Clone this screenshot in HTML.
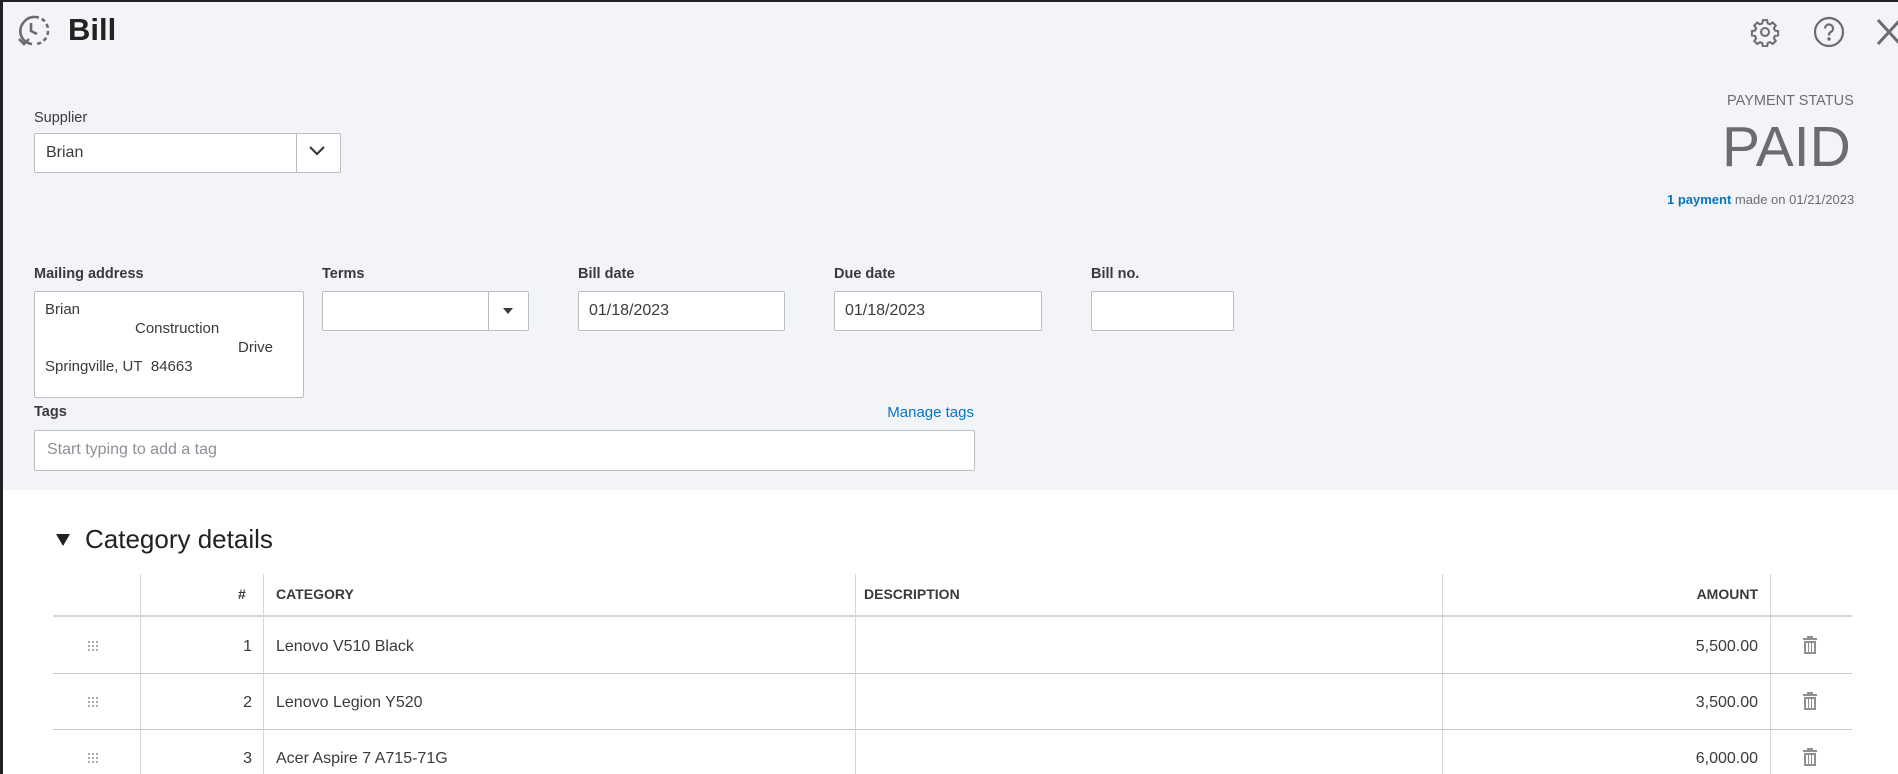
<!DOCTYPE html>
<html><head><meta charset="utf-8"><style>
*{box-sizing:border-box;margin:0;padding:0}
body{width:1898px;height:774px;overflow:hidden;background:#fff;font-family:"Liberation Sans",sans-serif;color:#393a3d;position:relative}
.abs{position:absolute}
#gray{left:0;top:0;width:1898px;height:490px;background:#f3f4f8}
#topb{left:0;top:0;width:1898px;height:2px;background:#222}
#leftb{left:0;top:0;width:3px;height:774px;background:#222}
.lbl{font-size:14.5px;color:#393a3d}
.box{background:#fff;border:1px solid #babec5;border-radius:2px}
.itxt{font-size:16px;color:#393a3d}
.hd{font-size:14px;font-weight:bold;color:#393a3d;top:586px}
.vl{width:1px;background:#d4d7dc}
.rt{font-size:16px;color:#393a3d}
.r{text-align:right}
.ad{font-size:15px;color:#393a3d}
</style></head><body>
<div class="abs" id="gray"></div>
<div class="abs" id="topb"></div>
<div class="abs" id="leftb"></div>

<svg class="abs" style="left:18px;top:14px" width="34" height="34" viewBox="0 0 34 34" fill="none" stroke="#6b6c72" stroke-width="2.6">
<path d="M17 3a13 13 0 0 1 13 13" stroke-dasharray="4 3"/><path d="M30 17a13 13 0 0 1-13 13" stroke-dasharray="4 3"/>
<path d="M14 30A13 13 0 0 1 6 8"/><path d="M6 8A13 13 0 0 1 17 3"/>
<path d="M13 9v8l6 3"/><path d="M1 25l5 5 5-5"/></svg>
<div class="abs" style="left:68px;top:12px;font-size:31px;font-weight:bold;color:#222">Bill</div>

<svg class="abs" style="left:1750px;top:17px" width="30" height="30" viewBox="0 0 24 24" fill="none" stroke="#6b6c72" stroke-width="1.6"><circle cx="12" cy="12" r="3.2"/><path d="M10.3 2.5h3.4l.5 2.6 1.8.8 2.2-1.5 2.4 2.4-1.5 2.2.8 1.8 2.6.5v3.4l-2.6.5-.8 1.8 1.5 2.2-2.4 2.4-2.2-1.5-1.8.8-.5 2.6h-3.4l-.5-2.6-1.8-.8-2.2 1.5-2.4-2.4 1.5-2.2-.8-1.8-2.6-.5v-3.4l2.6-.5.8-1.8-1.5-2.2 2.4-2.4 2.2 1.5 1.8-.8z"/></svg>
<svg class="abs" style="left:1813px;top:16px" width="32" height="32" viewBox="0 0 32 32" fill="none" stroke="#6b6c72" stroke-width="2.2"><circle cx="16" cy="16" r="14"/><path d="M12 12.5a4 4 0 1 1 5.5 3.7c-1 .5-1.5 1.2-1.5 2.3v1"/><circle cx="16" cy="23" r="0.6" fill="#6b6c72"/></svg>
<svg class="abs" style="left:1876px;top:18px" width="26" height="28" viewBox="0 0 26 28" stroke="#6b6c72" stroke-width="3"><path d="M2 2l22 24M24 2L2 26"/></svg>

<div class="abs lbl" style="left:34px;top:110px">Supplier</div>
<div class="abs box" style="left:34px;top:133px;width:307px;height:40px"></div>
<div class="abs" style="left:296px;top:134px;width:1px;height:38px;background:#babec5"></div>
<div class="abs itxt" style="left:46px;top:144px">Brian</div>
<svg class="abs" style="left:308px;top:145px" width="18" height="12" viewBox="0 0 18 12" fill="none" stroke="#393a3d" stroke-width="2.2"><path d="M2 2l7 7 7-7"/></svg>

<div class="abs" style="left:1727px;top:93px;font-size:14.5px;color:#6b6c72">PAYMENT STATUS</div>
<div class="abs" style="left:1722px;top:114px;font-size:57px;color:#6b6c72">PAID</div>
<div class="abs" style="left:1667px;top:192px;font-size:13px;color:#6b6c72"><span style="color:#0077c5;font-weight:bold">1 payment</span> made on 01/21/2023</div>

<div class="abs lbl" style="left:34px;top:266px;font-weight:bold">Mailing address</div>
<div class="abs box" style="left:34px;top:291px;width:270px;height:107px"></div>
<div class="abs ad" style="left:45px;top:301px">Brian</div>
<div class="abs ad" style="left:135px;top:320px">Construction</div>
<div class="abs ad" style="left:238px;top:339px">Drive</div>
<div class="abs ad" style="left:45px;top:358px">Springville, UT&nbsp; 84663</div>

<div class="abs lbl" style="left:322px;top:266px;font-weight:bold">Terms</div>
<div class="abs box" style="left:322px;top:291px;width:207px;height:40px"></div>
<div class="abs" style="left:488px;top:292px;width:1px;height:38px;background:#babec5"></div>
<div class="abs" style="left:503px;top:308px;border-left:5px solid transparent;border-right:5px solid transparent;border-top:6px solid #393a3d"></div>

<div class="abs lbl" style="left:578px;top:266px;font-weight:bold">Bill date</div>
<div class="abs box" style="left:578px;top:291px;width:207px;height:40px"></div>
<div class="abs itxt" style="left:589px;top:302px">01/18/2023</div>
<div class="abs lbl" style="left:834px;top:266px;font-weight:bold">Due date</div>
<div class="abs box" style="left:834px;top:291px;width:208px;height:40px"></div>
<div class="abs itxt" style="left:845px;top:302px">01/18/2023</div>
<div class="abs lbl" style="left:1091px;top:266px;font-weight:bold">Bill no.</div>
<div class="abs box" style="left:1091px;top:291px;width:143px;height:40px"></div>

<div class="abs lbl" style="left:34px;top:404px;font-weight:bold">Tags</div>
<div class="abs" style="left:860px;top:404px;width:114px;text-align:right;font-size:15px;color:#0077c5">Manage tags</div>
<div class="abs box" style="left:34px;top:430px;width:941px;height:41px"></div>
<div class="abs" style="left:47px;top:441px;font-size:16px;color:#8d9096">Start typing to add a tag</div>

<div class="abs" style="left:56px;top:534px;border-left:7px solid transparent;border-right:7px solid transparent;border-top:12px solid #222"></div>
<div class="abs" style="left:85px;top:524px;font-size:26px;color:#222">Category details</div>

<div class="abs vl" style="left:140px;top:574px;height:200px"></div>
<div class="abs vl" style="left:263px;top:574px;height:200px"></div>
<div class="abs vl" style="left:855px;top:574px;height:200px"></div>
<div class="abs vl" style="left:1442px;top:574px;height:200px"></div>
<div class="abs vl" style="left:1770px;top:574px;height:200px"></div>
<div class="abs" style="left:53px;top:615px;width:1799px;height:2px;background:#d4d7dc"></div>
<div class="abs" style="left:53px;top:673px;width:1799px;height:1px;background:#c6c8cc"></div>
<div class="abs" style="left:53px;top:729px;width:1799px;height:1px;background:#c6c8cc"></div>

<div class="abs hd" style="left:238px">#</div>
<div class="abs hd" style="left:276px">CATEGORY</div>
<div class="abs hd" style="left:864px">DESCRIPTION</div>
<div class="abs hd r" style="left:1600px;width:158px">AMOUNT</div>

<div class="abs rt r" style="left:200px;width:52px;top:638px">1</div>
<div class="abs rt" style="left:276px;top:638px">Lenovo V510 Black</div>
<div class="abs rt r" style="left:1600px;width:158px;top:638px">5,500.00</div>
<div class="abs rt r" style="left:200px;width:52px;top:694px">2</div>
<div class="abs rt" style="left:276px;top:694px">Lenovo Legion Y520</div>
<div class="abs rt r" style="left:1600px;width:158px;top:694px">3,500.00</div>
<div class="abs rt r" style="left:200px;width:52px;top:750px">3</div>
<div class="abs rt" style="left:276px;top:750px">Acer Aspire 7 A715-71G</div>
<div class="abs rt r" style="left:1600px;width:158px;top:750px">6,000.00</div>

<svg width="0" height="0" style="position:absolute"><defs>
<g id="dots" fill="#8d9096"><circle cx="1" cy="1" r="1"/><circle cx="5" cy="1" r="1"/><circle cx="9" cy="1" r="1"/><circle cx="1" cy="5" r="1"/><circle cx="5" cy="5" r="1"/><circle cx="9" cy="5" r="1"/><circle cx="1" cy="9" r="1"/><circle cx="5" cy="9" r="1"/><circle cx="9" cy="9" r="1"/></g>
<g id="trash" fill="#8d9096"><rect x="4" y="0" width="6" height="2"/><rect x="0" y="2" width="14" height="2"/><path d="M1 5h12v13H1zM3 7v9h2V7zM6 7v9h2V7zM9 7v9h2V7z" fill-rule="evenodd"/></g>
</defs></svg>
<svg class="abs" style="left:88px;top:641px" width="11" height="11"><use href="#dots"/></svg>
<svg class="abs" style="left:88px;top:697px" width="11" height="11"><use href="#dots"/></svg>
<svg class="abs" style="left:88px;top:753px" width="11" height="11"><use href="#dots"/></svg>
<svg class="abs" style="left:1803px;top:636px" width="14" height="18"><use href="#trash"/></svg>
<svg class="abs" style="left:1803px;top:692px" width="14" height="18"><use href="#trash"/></svg>
<svg class="abs" style="left:1803px;top:748px" width="14" height="18"><use href="#trash"/></svg>
</body></html>
